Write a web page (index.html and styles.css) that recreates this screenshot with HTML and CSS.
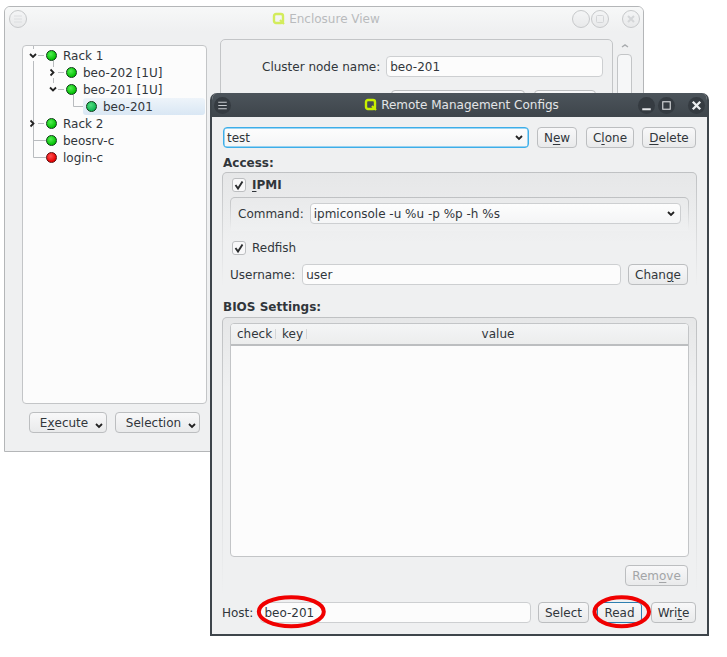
FILE: index.html
```html
<!DOCTYPE html>
<html lang="en">
<head>
<meta charset="utf-8">
<title>Remote Management Configs</title>
<link rel="stylesheet" href="styles.css">
</head>
<body>
<section class="window back">
  <header class="back-title">
    <span class="wbtn"><svg viewBox="0 0 16 16"><path d="M4 5h8M4 8h8M4 11h8" stroke="#dcdee0" fill="none"/></svg></span>
    <span class="title-center faded"><svg class="qlogo" viewBox="0 0 14 14"><rect x="2" y="2" width="9" height="9" rx="2" fill="none" stroke="#d3ec5c" stroke-width="2.400"/><path d="M8 8l4 4" stroke="#d3ec5c" stroke-width="2.200"/></svg>Enclosure View</span>
    <span class="wbtn"></span>
    <span class="wbtn"><svg viewBox="0 0 16 16"><rect x="4.500" y="4.500" width="7" height="7" rx="1" stroke="#d4d6d8" fill="none"/></svg></span>
    <span class="wbtn gap"><svg viewBox="0 0 16 16"><path d="M5 5l6 6M11 5l-6 6" stroke="#d4d6d8" stroke-width="2" fill="none"/></svg></span>
  </header>
  <div class="back-body">
    <div class="left-col">
      <div class="tree">
        <svg class="tree-lines" width="100" height="130" viewBox="0 0 100 130">
          <g stroke="#b9bcbf" fill="none">
            <path d="M11.500 0v4M11.500 16v96.500h14M11.500 95.500h14M16 10.500h6M31.500 16v6M31.500 33v5M36 27.500h6M36 44.500h6M51.500 50v11.500h12M16 78.500h6"/>
          </g>
          <g stroke="#222" stroke-width="1.800" fill="none">
            <path d="M8 9l3 3 3-3M28.500 24.500l3 3-3 3M28 42.500l3 3 3-3M8.500 75.500l3 3-3 3"/>
          </g>
        </svg>
        <div class="node lv1"><i class="led"></i>Rack 1</div>
        <div class="node lv2"><i class="led"></i>beo-202 [1U]</div>
        <div class="node lv2"><i class="led"></i>beo-201 [1U]</div>
        <div class="node lv3 selected"><i class="led"></i>beo-201</div>
        <div class="node lv1"><i class="led"></i>Rack 2</div>
        <div class="node lv1"><i class="led"></i>beosrv-c</div>
        <div class="node lv1"><i class="led red"></i>login-c</div>
      </div>
      <div class="tree-btns">
        <button class="btn menu">E<u>x</u>ecute<svg viewBox="0 0 8 6"><path d="M1 1l3 3 3-3" stroke="#222" stroke-width="1.800" fill="none"/></svg></button>
        <button class="btn menu">Selection<svg viewBox="0 0 8 6"><path d="M1 1l3 3 3-3" stroke="#222" stroke-width="1.800" fill="none"/></svg></button>
      </div>
    </div>
    <div class="right-col">
      <div class="details">
        <div class="row node-row"><label>Cluster node name:</label><span class="input grow">beo-201</span></div>
        <div class="row hidden-row"><span class="btn wide"></span><span class="btn short"></span></div>
      </div>
      <div class="scroll"><svg viewBox="0 0 8 6"><path d="M1 4l3-2 3 2" stroke="#a9acaf" stroke-width="1.500" fill="none"/></svg><span class="thumb"></span></div>
    </div>
  </div>
</section>

<section class="window front">
  <header class="front-title">
    <span class="dbtn"><svg viewBox="0 0 16 16"><path d="M4 5h8M4 8h8M4 11h8" stroke="#c8ccd0" fill="none"/></svg></span>
    <span class="title-center"><svg class="qlogo" viewBox="0 0 14 14"><rect x="2" y="2" width="9" height="9" rx="2" fill="none" stroke="#c8f000" stroke-width="2.400"/><path d="M8 8l4 4" stroke="#c8f000" stroke-width="2.200"/></svg>Remote Management Configs</span>
    <span class="dbtn"><svg viewBox="0 0 16 16"><path d="M4 11.500h8" stroke="#e4e6e8" stroke-width="2" fill="none"/></svg></span>
    <span class="dbtn"><svg viewBox="0 0 16 16"><rect x="4.500" y="4.500" width="7" height="7" stroke="#e4e6e8" fill="none"/></svg></span>
    <span class="dbtn gap"><svg viewBox="0 0 16 16"><path d="M4.500 4.500l7 7M11.500 4.500l-7 7" stroke="#eceef0" stroke-width="2.200" fill="none"/></svg></span>
  </header>
  <div class="front-body">
    <div class="row profile-row">
      <span class="combo focus">test<svg viewBox="0 0 8 6"><path d="M1 1l3 3 3-3" stroke="#222" stroke-width="1.800" fill="none"/></svg></span>
      <button class="btn b-new">N<u>e</u>w</button>
      <button class="btn b-clone">C<u>l</u>one</button>
      <button class="btn b-delete"><u>D</u>elete</button>
    </div>
    <h2 class="section-label access-label">Access:</h2>
    <div class="group access">
      <div class="check-row"><span class="check"><svg viewBox="0 0 14 14"><path d="M3.500 7l2.500 3.500 4.500-7" stroke="#2b2d2f" stroke-width="1.900" fill="none"/></svg></span><strong><u>I</u>PMI</strong></div>
      <div class="subgroup">
        <div class="row"><label>Command:</label><span class="combo grow plain">ipmiconsole -u %u -p %p -h %s<svg viewBox="0 0 8 6"><path d="M1 1l3 3 3-3" stroke="#222" stroke-width="1.800" fill="none"/></svg></span></div>
      </div>
      <div class="check-row redfish"><span class="check"><svg viewBox="0 0 14 14"><path d="M3.500 7l2.500 3.500 4.500-7" stroke="#2b2d2f" stroke-width="1.900" fill="none"/></svg></span>Redfish</div>
      <div class="row user-row"><label>Username:</label><span class="input grow">user</span><button class="btn b-change">Chan<u>g</u>e</button></div>
    </div>
    <h2 class="section-label bios-label">BIOS Settings:</h2>
    <div class="group bios">
      <div class="table">
        <div class="thead"><span class="th th-check">check</span><span class="th th-key">key</span><span class="th th-value">value</span></div>
        <div class="tbody"></div>
      </div>
      <div class="remove-row"><button class="btn b-remove" disabled>Rem<u>o</u>ve</button></div>
    </div>
    <div class="row host-row">
      <label>Host:</label><span class="input grow">beo-201</span>
      <button class="btn b-select">Select</button>
      <button class="btn b-read">Read</button>
      <button class="btn b-write">Wri<u>t</u>e</button>
    </div>
  </div>
</section>

<svg class="annotations" width="727" height="657" viewBox="0 0 727 657">
  <ellipse cx="291.300" cy="611.700" rx="32.500" ry="14.500" fill="none" stroke="#f00000" stroke-width="4"/>
  <ellipse cx="621.700" cy="611.700" rx="27.300" ry="14.500" fill="none" stroke="#f00000" stroke-width="4"/>
</svg>
</body>
</html>
```
FILE: styles.css
```css
* { box-sizing: border-box; }
html, body { margin: 0; padding: 0; background: #fff; }
body { width: 727px; height: 657px; position: relative; overflow: hidden; font: 12px/16px "DejaVu Sans", sans-serif; color: #31363b; }
button { font: inherit; color: inherit; }
label { white-space: nowrap; }
u { text-underline-offset: 2px; text-decoration-thickness: 1px; }

.window { position: absolute; background: #eff0f1; overflow: hidden; }
.back { left: 4px; top: 6px; width: 640px; height: 446px; border: 1px solid #b4b6b8; border-radius: 6px 6px 0 0; }
.front { left: 210px; top: 93px; width: 499px; height: 543px; border: 2px solid #3e454b; border-top: 0; border-radius: 7px 7px 0 0; }

.back-title { height: 24px; margin-bottom: 6px; display: flex; align-items: center; padding: 0 3px; background: linear-gradient(#f7f8f8, #eff0f1); }
.title-center { flex: 1; display: flex; align-items: center; justify-content: center; gap: 3px; padding-left: 54px; white-space: nowrap; }
.faded { color: #b9bbbd; }
.qlogo { width: 14px; height: 14px; }
.wbtn { width: 18px; height: 18px; margin-left: 1px; border-radius: 50%; border: 1px solid #c6c8ca; background: linear-gradient(#f4f5f6, #e8e9ea); flex: none; }
.wbtn svg, .dbtn svg { display: block; width: 100%; height: 100%; }
.wbtn.gap { margin-left: 13px; }

.back-body { display: flex; padding: 8px 11px 0 17px; gap: 13px; }
.left-col { width: 185px; flex: none; }
.tree { position: relative; height: 359px; padding-top: 1px; border: 1px solid #c3c5c7; border-radius: 4px; background: #fcfcfc; overflow: hidden; }
.tree-lines { position: absolute; left: -1px; top: -1px; }
.node { position: relative; height: 17px; display: flex; align-items: center; white-space: nowrap; }
.lv1 { padding-left: 40px; }
.lv2 { padding-left: 60px; }
.lv3 { padding-left: 20px; margin-left: 60px; margin-right: 1px; }
.selected { background: linear-gradient(#eef4fa, #d9e7f4); border-radius: 3px; }
.led { width: 11px; height: 11px; flex: none; border-radius: 50%; margin-left: -17px; margin-right: 6px; border: 1px solid #0a3a14; background: radial-gradient(circle at 40% 35%, #52f052, #05c005 70%); }
.selected .led { background: radial-gradient(circle at 40% 35%, #50dd80, #10b555 70%); }
.led.red { border-color: #5a0a0a; background: radial-gradient(circle at 40% 35%, #ff5050, #e80000 70%); }
.tree-btns { display: flex; gap: 8px; padding: 8px 7px 0 7px; }

.btn { height: 21px; padding: 0; border: 1px solid #bcbec0; border-radius: 4px; background: linear-gradient(#f8f8f9, #e9eaeb); display: inline-flex; align-items: center; justify-content: center; white-space: nowrap; flex: none; }
.menu { width: 78px; position: relative; padding-right: 8px; }
.menu + .menu { width: 85px; }
.menu svg { position: absolute; right: 3px; bottom: 3px; width: 8px; height: 6px; }

.right-col { flex: 1; display: flex; gap: 4px; margin-top: -6px; }
.details { flex: 1; height: 300px; border: 1px solid #c3c5c7; border-radius: 5px 5px 0 0; padding: 16px 9px 0 41px; }
.row { display: flex; align-items: center; gap: 6px; }
.node-row { gap: 6px; }
.hidden-row { margin-top: 13px; gap: 9px; justify-content: flex-end; }
.wide { width: 134px; }
.short { width: 62px; margin-right: 7px; }
.input { height: 21px; padding: 0 3px; display: flex; align-items: center; border: 1px solid #cdcfd1; border-radius: 4px; background: #fcfcfc; white-space: nowrap; }
.grow { flex: 1; min-width: 0; }
.scroll { width: 15px; flex: none; }
.scroll > svg { display: block; width: 8px; height: 6px; margin: 4px auto 5px; }
.thumb { display: block; height: 60px; border: 1px solid #c3c5c7; border-radius: 4px; background: #f6f7f8; }

.front-title { height: 24px; display: flex; align-items: center; gap: 3px; padding: 0 2px 0 2px; background: linear-gradient(#4c545b, #3e454b); color: #e3e5e7; }
.dbtn { width: 17px; height: 17px; flex: none; border-radius: 50%; background: #353b41; }
.dbtn.gap { margin-left: 10px; }

.front-body { padding: 10px 11px 0 11px; }
.profile-row { gap: 8px; }
.combo { height: 21px; padding: 0 3px; display: flex; align-items: center; justify-content: space-between; border-radius: 4px; background: linear-gradient(#fdfdfd, #f4f5f6); white-space: nowrap; }
.combo svg { width: 8px; height: 6px; margin-right: 2px; }
.focus { width: 306px; border: 1px solid #3daee9; box-shadow: inset 0 0 0 .5px #3daee9; }
.plain { border: 1px solid #cdcfd1; }
.b-new { width: 40px; margin-right: 1px; }
.b-clone { width: 48px; }
.b-delete { width: 54px; }
.section-label { margin: 0; font-size: 12px; line-height: 16px; font-weight: 700; }
.access-label { margin-top: 7px; }
.bios-label { margin-top: 14px; }

.group { width: 475px; margin-left: -1px; border: 1px solid transparent; border-bottom: 0; border-radius: 5px 5px 0 0; background: linear-gradient(#e6e7e8, #eff0f1 70px) padding-box, linear-gradient(#bfc1c3, #eff0f1) border-box; }
.access { margin-top: 1px; height: 113px; padding: 5px 7px 0 7px; }
.check-row { display: flex; align-items: center; gap: 6px; height: 14px; padding-left: 2px; }
.check { width: 14px; height: 14px; flex: none; border: 1px solid #bcbec0; border-radius: 3px; background: #f8f8f9; }
.check svg { display: block; margin: -1px; width: 14px; height: 14px; }
.subgroup { margin-top: 5px; height: 34px; padding: 5px 7px 0 7px; border: 1px solid transparent; border-bottom: 0; border-radius: 5px 5px 0 0; background: linear-gradient(#e9eaeb, #eff0f1) padding-box, linear-gradient(#bfc1c3, #eff0f1) border-box; }
.redfish { margin-top: 10px; }
.user-row { margin-top: 9px; gap: 7px; }
.b-change { width: 60px; margin-right: 1px; }

.bios { margin-top: 2px; height: 277px; padding: 5px 7px 0 7px; }
.table { height: 234px; display: flex; flex-direction: column; border: 1px solid #c3c5c7; border-radius: 4px; background: #fcfcfc; overflow: hidden; }
.thead { height: 22px; flex: none; display: flex; align-items: center; background: linear-gradient(#f4f5f6, #eceded); border-bottom: 2px solid #bcbec0; }
.th { position: relative; padding-left: 6px; white-space: nowrap; }
.th-check { width: 45px; }
.th-key { width: 75px; }
.th-value { flex: 1; padding-left: 0; padding-right: 43px; text-align: center; }
.th-check::after, .th-key::after { content: ""; position: absolute; right: 0; top: 3px; height: 10px; border-right: 1px solid #d4d6d8; }
.th-key::after { left: 30px; right: auto; }
.tbody { flex: 1; }
.remove-row { display: flex; justify-content: flex-end; padding: 8px 1px 0 0; }
.b-remove { width: 63px; color: #a3a5a7; }

.host-row { margin: 8px 0 0 -1px; gap: 7px; }
.b-select { width: 51px; }
.b-read { width: 45px; margin-left: 1px; margin-right: 2px; border-color: #2f7fb0; }
.b-write { width: 45px; }

.annotations { position: absolute; left: 0; top: 0; pointer-events: none; }
```
